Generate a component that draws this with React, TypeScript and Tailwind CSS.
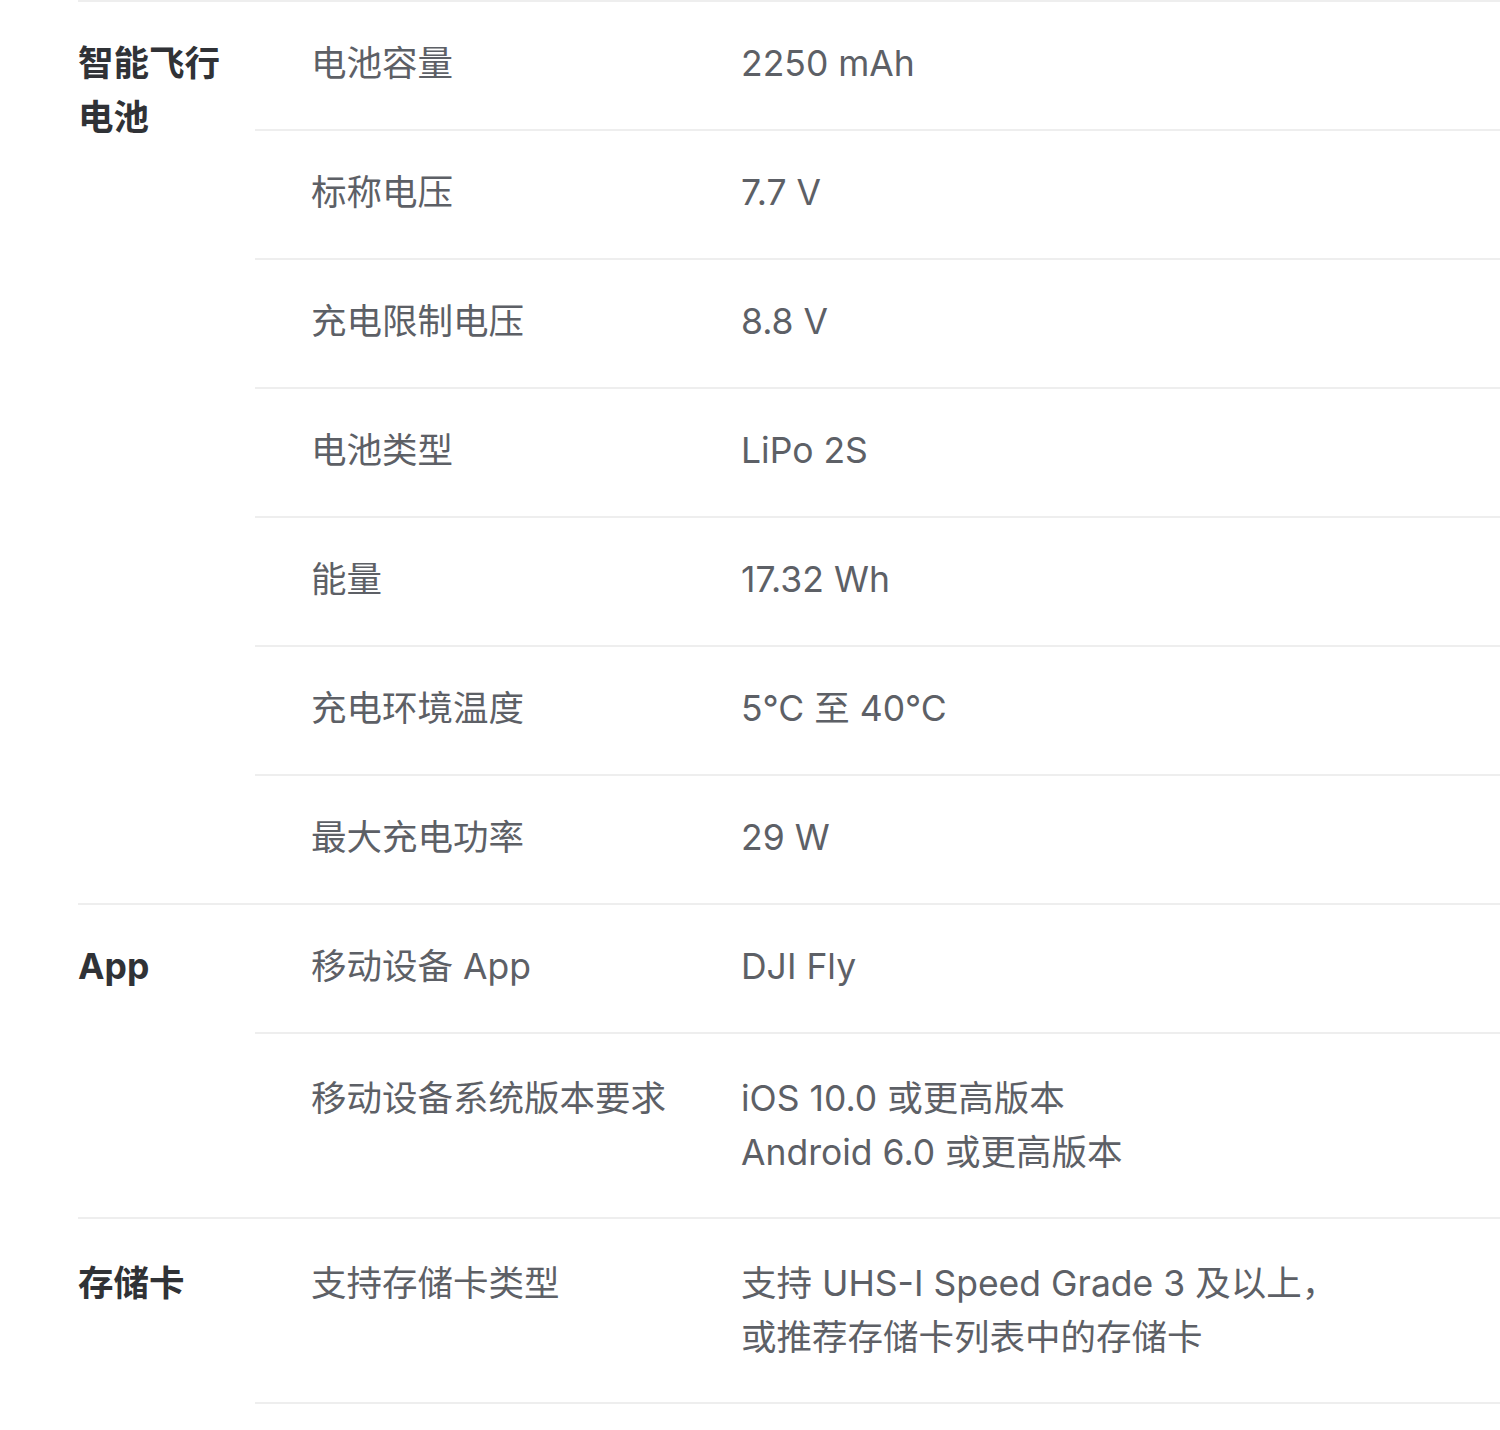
type Item = { label: string; value: string[] };
type Group = { title: string; items: Item[]; closed: boolean };

const groups: Group[] = [
  {
    title: '智能飞行电池',
    closed: true,
    items: [
      { label: '电池容量', value: ['2250 mAh'] },
      { label: '标称电压', value: ['7.7 V'] },
      { label: '充电限制电压', value: ['8.8 V'] },
      { label: '电池类型', value: ['LiPo 2S'] },
      { label: '能量', value: ['17.32 Wh'] },
      { label: '充电环境温度', value: ['5℃ 至 40℃'] },
      { label: '最大充电功率', value: ['29 W'] },
    ],
  },
  {
    title: 'App',
    closed: true,
    items: [
      { label: '移动设备 App', value: ['DJI Fly'] },
      { label: '移动设备系统版本要求', value: ['iOS 10.0 或更高版本', 'Android 6.0 或更高版本'] },
    ],
  },
  {
    title: '存储卡',
    closed: false,
    items: [
      { label: '支持存储卡类型', value: ['支持 UHS-I Speed Grade 3 及以上，', '或推荐存储卡列表中的存储卡'] },
    ],
  },
];

function SpecRow({ item, last, first }: { item: Item; last: boolean; first: boolean }) {
  const multi = item.value.length > 1;
  return (
    <div
      className={[
        'flex',
        multi ? 'pt-[38px] pb-[37px]' : 'pt-[35px] pb-[38px]',
        last ? '' : 'border-b-2 border-[#eeeeee]',
      ].join(' ')}>
      <div className="w-[486px] shrink-0 pl-[56px] text-[#5d6066]">{item.label}</div>
      <div className="text-[#5d6066]" data-first={first}>
        {item.value.map((line) => (
          <div key={line}>{line}</div>
        ))}
      </div>
    </div>
  );
}

export default function App() {
  return (
    <div
      className="min-h-[1430px] bg-white pl-[78px] text-[35.5px] leading-[54px]"
      style={{ fontFamily: 'Inter, "Noto Sans CJK SC", sans-serif' }}>
      <div className="border-t-2 border-[#eeeeee]">
        {groups.map((group) => (
          // Cada grupo: título a la izquierda, filas de especificaciones a la derecha.
          <div key={group.title} className={group.closed ? 'flex border-b-2 border-[#eeeeee]' : 'flex'}>
            <div
              className={
                group.items[0].value.length > 1
                  ? 'w-[177px] shrink-0 pt-[38px] pr-[30px] font-bold text-[#303236]'
                  : 'w-[177px] shrink-0 pt-[35px] pr-[30px] font-bold text-[#303236]'
              }>
              {group.title}
            </div>
            <div className="flex-1">
              {group.items.map((item, i) => (
                <SpecRow
                  key={item.label}
                  item={item}
                  first={i === 0}
                  last={group.closed && i === group.items.length - 1}
                />
              ))}
            </div>
          </div>
        ))}
      </div>
    </div>
  );
}
